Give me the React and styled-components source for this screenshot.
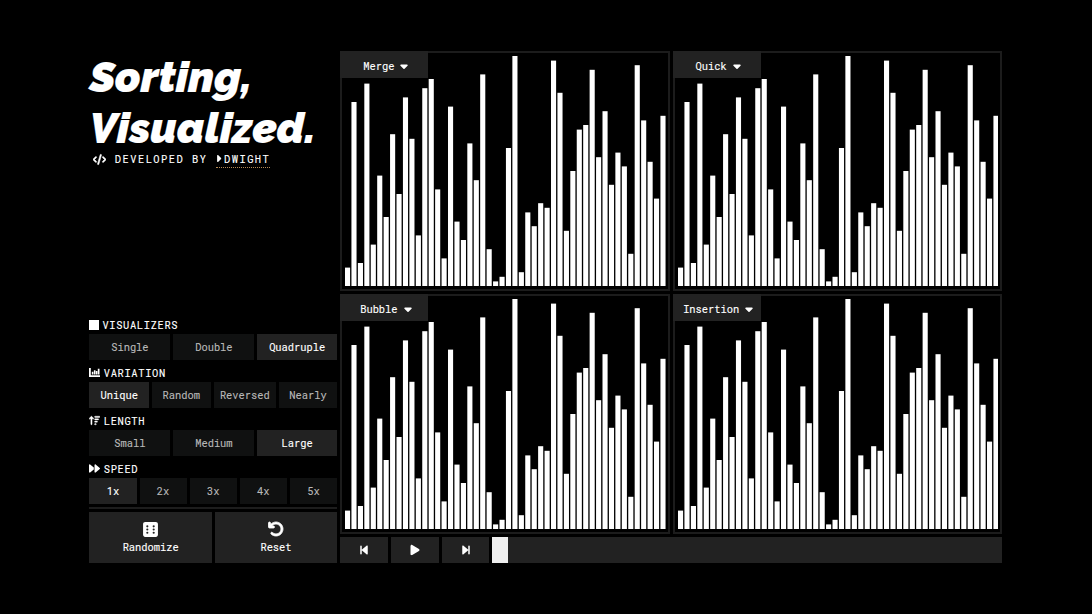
import React from "react";
import styled, { createGlobalStyle } from "styled-components";
import {
  FaCode, FaCaretRight, FaCaretDown, FaArrowUpWideShort, FaForward,
  FaDiceSix, FaArrowRotateLeft, FaBackwardStep, FaPlay, FaForwardStep,
} from "react-icons/fa6";

const Global = createGlobalStyle`
  * { box-sizing: border-box; }
  body { margin: 0; background: #000; overflow: hidden; }
`;

const Page = styled.main`
  width: 1092px;
  height: 614px;
  padding: 51px 90px 51px 89.4px;
  display: grid;
  grid-template-columns: 247.6px 1fr;
  gap: 3.4px;
  background: #000;
  color: #fff;
  font-family: "Roboto Mono", "DejaVu Sans Mono", monospace;
  font-size: 10.4px;
  -webkit-text-stroke: 0.12px currentColor;
`;

const Sidebar = styled.aside`
  display: flex;
  flex-direction: column;
  justify-content: space-between;
`;

const Title = styled.h1`
  margin: 0;
  padding-top: 1px;
  font: italic 900 43px/51px Raleway, Lato, sans-serif;
  white-space: nowrap;
`;

const TitleLine = styled.span`
  display: block;
  letter-spacing: ${(p) => p.$spacing};
`;

const Credit = styled.div`
  display: flex;
  align-items: center;
  height: 10px;
  padding-left: 3.4px;
  letter-spacing: 1.48px;
  white-space: pre;
  svg { flex: none; }
`;

const CodeIcon = styled(FaCode)`
  stroke: #fff;
  stroke-width: 28px;
`;

const CreditText = styled.span`
  margin: 0 9px 0 9px;
`;

const Author = styled.span`
  display: flex;
  align-items: center;
  height: 16px;
  margin-top: 1px;
  padding-bottom: 1px;
  border-bottom: 1px dotted #b58a55;
`;

const AuthorCaret = styled(FaCaretRight)`
  margin: 0 0 0 -3.4px;
`;

const Controls = styled.div`
  display: flex;
  flex-direction: column;
`;

const Label = styled.div`
  display: flex;
  align-items: center;
  gap: ${(p) => p.$gap}px;
  height: 22px;
  padding-top: 3.4px;
  letter-spacing: 0.66px;
`;

const Square = styled.span`
  width: 9.4px;
  height: 10px;
  background: #fff;
`;

const Options = styled.div`
  display: grid;
  grid-template-columns: ${(p) => p.$columns};
  gap: 3px;
  height: 26px;
`;

const Button = styled.button`
  display: flex;
  align-items: center;
  justify-content: center;
  padding: 0;
  border: 0;
  background: ${(p) => (p.$active ? "#222" : "#101111")};
  color: ${(p) => (p.$active ? "#fff" : "#b8b8b8")};
  font: inherit;
`;

const ActionButton = styled(Button)`
  flex-direction: column;
  gap: ${(p) => p.$gap}px;
  svg { stroke: #fff; stroke-width: ${(p) => p.$stroke || 0}px; overflow: visible; }
`;

const Divider = styled.hr`
  width: 100%;
  height: 2px;
  margin: 3px 0 3px;
  border: 0;
  background: #1d1d1d;
`;

const Actions = styled.div`
  display: grid;
  grid-template-columns: 122.6px 1fr;
  gap: 3px;
  height: 51px;
`;

const Stage = styled.section`
  display: grid;
  grid-template-rows: 240px 240px 26px;
  gap: 3px;
`;

const PanelRow = styled.div`
  display: grid;
  grid-template-columns: 1fr 1fr;
  gap: 3px;
`;

const Panel = styled.article`
  position: relative;
  border: 2px solid #1c1c1c;
  padding: 0 1.8px 3px 3px;
`;

const Picker = styled.button`
  position: absolute;
  top: -2px;
  left: -2px;
  display: flex;
  align-items: center;
  justify-content: center;
  gap: 4px;
  width: 88px;
  height: 27px;
  padding: 2px 0 0 5px;
  border: 0;
  background: #222;
  color: #fff;
  font: inherit;
`;

const Chart = styled.svg`
  display: block;
  width: 100%;
  height: 233px;
`;

const Player = styled.div`
  display: grid;
  grid-template-columns: 48px 48px 47.6px 1fr;
  gap: 2.7px;
`;

const Track = styled.div`
  background: #222;
`;

const Thumb = styled.div`
  width: 16.3px;
  height: 100%;
  background: #efefef;
`;

const values = [
  4, 40, 5, 44, 9, 24, 15, 33, 20, 41, 32, 11, 43, 45, 21, 6, 39, 14, 10, 31,
  23, 46, 8, 1, 2, 30, 50, 3, 16, 13, 18, 17, 49, 42, 12, 25, 34, 35, 47, 28,
  38, 22, 29, 26, 7, 48, 36, 27, 19, 37,
];

const ChartIcon = () => (
  <svg width="11" height="10" viewBox="0 0 11 10" fill="#fff">
    <path d="M0 0h1.8v7.2H11V9H0zM2.8 3.8h1.6v2.7H2.8zM4.9 2.2h1.6v4.3H4.9zM6.9 3.1h1.5v3.4H6.9zM8.8 .8h1.7v5.7H8.8z" />
  </svg>
);

const groups = [
  { label: "VISUALIZERS", icon: <Square />, gap: 3.6, columns: "81px 81px 1fr", items: ["Single", "Double", "Quadruple"], active: 2 },
  { label: "VARIATION", icon: <ChartIcon />, gap: 3.4, columns: "59.7px 58.5px 62.5px 1fr", items: ["Unique", "Random", "Reversed", "Nearly"], active: 0 },
  { label: "LENGTH", icon: <FaArrowUpWideShort size={11} stroke="#fff" strokeWidth={20} />, gap: 3.4, columns: "81px 81px 1fr", items: ["Small", "Medium", "Large"], active: 2 },
  { label: "SPEED", icon: <FaForward size={11} />, gap: 3.4, columns: "repeat(5, 1fr)", items: ["1x", "2x", "3x", "4x", "5x"], active: 0 },
];

function Visualizer({ name }) {
  return (
    <Panel>
      <Picker>{name}<FaCaretDown size={12} /></Picker>
      <Chart viewBox="0 0 320 233" preserveAspectRatio="none">
        {values.map((v, i) => (
          <rect key={i} x={i * 6.427} y={233 - v * 4.6} width="5.1" height={v * 4.6} fill="#fff" />
        ))}
      </Chart>
    </Panel>
  );
}

export default function App() {
  return (
    <Page>
      <Global />
      <Sidebar>
        <header>
          <Title>
            <TitleLine $spacing="0px">Sorting,</TitleLine>
            <TitleLine $spacing="0.1px">Visualized.</TitleLine>
          </Title>
          <Credit>
            <CodeIcon size={13} />
            <CreditText>DEVELOPED BY</CreditText>
            <Author><AuthorCaret size={11} />DWIGHT</Author>
          </Credit>
        </header>
        <Controls>
          {groups.map((g) => (
            <React.Fragment key={g.label}>
              <Label $gap={g.gap}>{g.icon}{g.label}</Label>
              <Options $columns={g.columns}>
                {g.items.map((item, i) => (
                  <Button key={item} $active={i === g.active}>{item}</Button>
                ))}
              </Options>
            </React.Fragment>
          ))}
          <Divider />
          <Actions>
            <ActionButton $active $gap={2}><FaDiceSix size={17} />Randomize</ActionButton>
            <ActionButton $active $gap={3} $stroke={26}><FaArrowRotateLeft size={16} />Reset</ActionButton>
          </Actions>
        </Controls>
      </Sidebar>
      <Stage>
        <PanelRow><Visualizer name="Merge" /><Visualizer name="Quick" /></PanelRow>
        <PanelRow><Visualizer name="Bubble" /><Visualizer name="Insertion" /></PanelRow>
        <Player>
          <Button $active><FaBackwardStep size={12} /></Button>
          <Button $active><FaPlay size={12} /></Button>
          <Button $active><FaForwardStep size={12} /></Button>
          <Track><Thumb /></Track>
        </Player>
      </Stage>
    </Page>
  );
}
